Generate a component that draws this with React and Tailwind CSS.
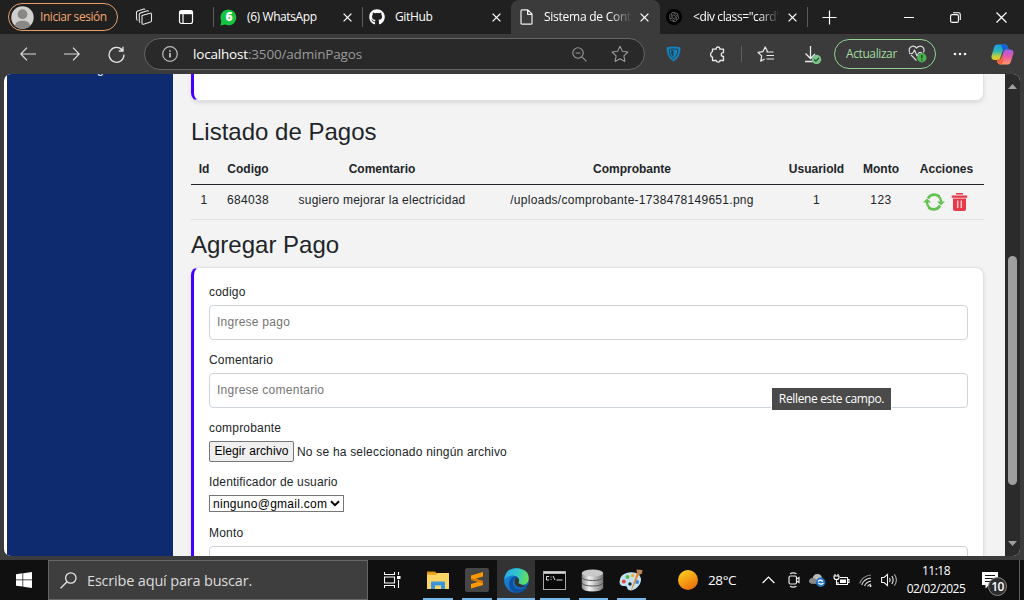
import React from 'react';
import { FaGithub } from 'react-icons/fa';
import { SiOpenai } from 'react-icons/si';

const UI = "font-['Open_Sans','Noto_Sans',sans-serif]";
const ARIAL = "font-['Liberation_Sans',Arial,sans-serif]";

function Cross({ className = '' }) {
  return (
    <svg width="9" height="9" viewBox="0 0 9 9" className={className} stroke="currentColor" strokeWidth="1.3" fill="none">
      <path d="M.6.6l7.8 7.8M8.4.6L.6 8.4" />
    </svg>
  );
}

function Avatar() {
  return (
    <svg width="23" height="23" viewBox="0 0 23 23">
      <defs>
        <clipPath id="face"><circle cx="11.5" cy="11.5" r="11.2" /></clipPath>
      </defs>
      <circle cx="11.5" cy="11.5" r="11.2" fill="#d2d0ce" />
      <g clipPath="url(#face)" fill="#8a8886">
        <circle cx="11.5" cy="8.2" r="4.9" />
        <path d="M3.5 23c0-6 2.500-8.200 8-8.200s8 2.200 8 8.200z" />
      </g>
    </svg>
  );
}

function WorkspacesIcon() {
  return (
    <svg width="18" height="18" viewBox="0 0 18 18" fill="none" stroke="#e4e4e4" strokeWidth="1.1" strokeLinejoin="round">
      <path d="M7 7.500L15.200 5.200Q16.500 5 16.500 6.300V12.500Q16.500 13.500 15.500 13.900L8.500 16.200Q7 16.500 7 15z" />
      <path d="M4.300 13.800V6.500Q4.300 5.300 5.500 4.900L12.300 2.800Q13.300 2.600 13.500 3.600" />
      <path d="M1.500 11.600V4.500Q1.500 3.300 2.700 2.900L8.800 1Q9.800.8 10 1.600" />
      <path d="M1.500 11.500l1 .7M4.300 13.800l1 .7" />
    </svg>
  );
}

function TabActionsIcon() {
  return (
    <svg width="16" height="16" viewBox="0 0 16 16" fill="none" stroke="#fff">
      <rect x="1.500" y="1.500" width="13" height="13" rx="2" strokeWidth="1.200" />
      <path d="M1.500 3.500h13" strokeWidth="3.400" />
      <path d="M5 4.500v10" strokeWidth="1.200" />
    </svg>
  );
}

function WhatsAppIcon() {
  return (
    <span className="relative flex size-[17px] items-center justify-center">
      <svg width="17" height="17" viewBox="0 0 17 17" className="absolute inset-0">
        <path d="M.5 16.500L1.300 12A7.900 7.900 0 1 1 5 15.600z" fill="#16c53f" />
      </svg>
      <span className="relative pl-px font-['Open_Sans',sans-serif] text-[12px] leading-none font-extrabold text-white">6</span>
    </span>
  );
}

function PageIcon() {
  return (
    <svg width="13" height="16" viewBox="0 0 13 16" fill="none" stroke="#f0f0f0" strokeWidth="1.200" strokeLinejoin="round">
      <path d="M2.200.8H7.800L12 5V14.200Q12 15.200 11 15.200H2Q1 15.200 1 14.200V2Q1 .8 2.200.8zM7.600.8V5.300H12" />
    </svg>
  );
}

function TabStrip() {
  return (
    <header className={`${UI} flex h-[34px] shrink-0 items-stretch bg-[#202020] text-[12px] text-white`}>
      <div className="flex w-[118px] items-center pl-2">
        <div className="flex h-7 w-[110px] items-center rounded-full border border-[#e8a06c] pl-[2px] text-[#f3a76f]">
          <Avatar />
          <span className="pl-[6px] tracking-[-0.45px] whitespace-nowrap">Iniciar sesión</span>
        </div>
      </div>
      <div className="flex w-[52px] items-center justify-center"><WorkspacesIcon /></div>
      <div className="flex w-[32px] items-center justify-center"><TabActionsIcon /></div>
      <div className="flex w-[160px] items-center pl-[11px]">
        <i className="h-5 w-px bg-[#5a5a5a]" />
        <span className="ml-[6px]"><WhatsAppIcon /></span>
        <span className="ml-[10px] w-[96px] tracking-[-0.4px] whitespace-nowrap">(6) WhatsApp</span>
        <Cross />
      </div>
      <div className="flex w-[149px] items-center">
        <i className="h-5 w-px bg-[#5a5a5a]" />
        <FaGithub size={16} className="ml-[6px]" />
        <span className="ml-[10px] w-[97px] tracking-[-0.35px]">GitHub</span>
        <Cross />
      </div>
      <div className="flex w-[149px] items-center rounded-t-lg bg-[#3b3b3b] pl-[9px]">
        <PageIcon />
        <span className="ml-[11px] w-[88px] overflow-hidden mask-r-from-75% tracking-[-0.25px] whitespace-nowrap">Sistema de Control</span>
        <Cross className="ml-[8px]" />
      </div>
      <div className="flex w-[149px] items-center pl-[6px]">
        <span className="flex size-4 items-center justify-center rounded-full bg-black text-[#777]"><SiOpenai size={10} /></span>
        <span className="ml-[11px] w-[87px] overflow-hidden mask-r-from-75% tracking-[-0.4px] whitespace-nowrap">&lt;div class="card"&gt;</span>
        <Cross className="ml-[8px]" />
        <i className="ml-[10px] h-5 w-px bg-[#5a5a5a]" />
      </div>
      <div className="flex w-[40px] items-center justify-center">
        <svg width="15" height="15" viewBox="0 0 15 15" stroke="#fff" strokeWidth="1.200"><path d="M7.500.5v14M.5 7.500h14" /></svg>
      </div>
      <div className="ml-auto flex w-[138px] items-center">
        <span className="flex w-[46px] justify-center"><i className="h-px w-[10px] bg-white" /></span>
        <span className="flex w-[46px] justify-center">
          <svg width="11" height="11" viewBox="0 0 11 11" fill="none" stroke="#fff" strokeWidth="1.100">
            <rect x=".6" y="2.600" width="7.800" height="7.800" rx="1.500" />
            <path d="M3 .7H8.500Q10.300.7 10.300 2.500V8" />
          </svg>
        </span>
        <span className="flex w-[46px] justify-center">
          <svg width="11" height="11" viewBox="0 0 11 11" stroke="#fff" strokeWidth="1.200"><path d="M.5.5l10 10M10.500.5l-10 10" /></svg>
        </span>
      </div>
    </header>
  );
}

function AddressBar() {
  return (
    <div className="flex h-8 w-[501px] items-center rounded-full border border-[#666] bg-[#292929] pl-[17px]">
      <svg width="16" height="16" viewBox="0 0 16 16" fill="none" stroke="#bdbdbd" strokeWidth="1.200">
        <circle cx="8" cy="8" r="7.300" />
        <path d="M8 7v4.500M8 4.200v1.600" strokeWidth="1.800" />
      </svg>
      <span className="ml-[15px] w-[379px] text-[13.500px] tracking-[-0.18px] text-[#9a9a9a]">
        <span className="text-white">localhost</span>:3500/adminPagos
      </span>
      <svg width="15" height="15" viewBox="0 0 15 15" fill="none" stroke="#999" strokeWidth="1.100">
        <circle cx="6" cy="6" r="5.200" /><path d="M3.500 6h5M9.800 9.800l4.700 4.500" />
      </svg>
      <svg width="18" height="18" viewBox="0 0 18 18" fill="none" stroke="#999" strokeWidth="1.100" strokeLinejoin="round" className="ml-[24px]">
        <path d="M9 1.200l2.400 5 5.500.8-4 3.900 1 5.500L9 13.800l-4.900 2.600 1-5.500-4-3.900 5.500-.8z" />
      </svg>
    </div>
  );
}

function CopilotIcon() {
  return (
    <svg width="23" height="21" viewBox="0 0 23 21">
      <defs>
        <linearGradient id="cpa" x1="0" y1="0" x2="0" y2="1">
          <stop offset="0" stopColor="#169be9" /><stop offset=".45" stopColor="#32b8b0" /><stop offset=".75" stopColor="#b9cf45" /><stop offset="1" stopColor="#f3c51c" />
        </linearGradient>
        <linearGradient id="cpb" x1="0" y1="0" x2="0" y2="1">
          <stop offset="0" stopColor="#a15ce8" /><stop offset=".5" stopColor="#e85aa4" /><stop offset="1" stopColor="#ff9a64" />
        </linearGradient>
      </defs>
      <path d="M6 .5H14.500Q16.500.5 17 3L17.600 5.500H14Q12 5.500 11.300 8L9.500 13.500Q8.800 16 6.500 16H3.500Q-.5 15.500.8 11L3 3.500Q3.800.5 6 .5z" fill="url(#cpa)" />
      <path d="M10 .5H14.500Q16.500.5 17 3L17.600 5.500H14Q12.500 5.500 11.800 6.500Z" fill="#1464d2" />
      <path d="M17 20.500H9.500Q7 20.500 6.300 18L5.700 15.700H7.500Q10 15.700 10.700 13L12.300 8Q13.200 5.400 15.500 5.400H19Q23.300 5.600 22.200 10L19.900 17.800Q19 20.500 17 20.500z" fill="url(#cpb)" />
      <path d="M5.700 15.700H7.500Q10 15.700 10.700 13l.6-2 1.200 5q-.5 4-3.500 4.500Q7 20 6.300 18z" fill="#f0643c" />
    </svg>
  );
}

function Toolbar() {
  return (
    <div className={`${UI} flex h-10 shrink-0 items-center bg-[#3b3b3b] text-[#e8e8e8]`}>
      <div className="flex w-[144px] items-center pl-5">
        <svg width="16" height="14" viewBox="0 0 16 14" fill="none" stroke="#dedede" strokeWidth="1.200"><path d="M16 7H1M7 .7L.8 7 7 13.300" /></svg>
        <svg width="16" height="14" viewBox="0 0 16 14" fill="none" stroke="#dedede" strokeWidth="1.200" className="ml-[28px]"><path d="M0 7h15M9 .7L15.200 7 9 13.300" /></svg>
        <svg width="17" height="17" viewBox="0 0 17 17" fill="none" stroke="#e8e8e8" strokeWidth="1.300" className="ml-[28px]">
          <path d="M14.500 4.500A7.400 7.400 0 1 0 15.900 8.500M15 .8V5H10.800" />
        </svg>
      </div>
      <AddressBar />
      <div className="flex w-[56px] justify-center">
        <svg width="15" height="16" viewBox="0 0 15 16">
          <path d="M.5 1.500Q4 .5 7.500.5T14.500 1.500Q14.500 11.500 7.500 15.500Q.5 11.500.5 1.500z" fill="#1683bd" />
          <path d="M3.200 3.400Q7.500 2.400 11.800 3.400Q11.800 10 7.500 12.800Q3.200 10 3.200 3.400z" fill="none" stroke="#243f4e" strokeWidth="1" />
          <path d="M5 4.500Q6.500 4.200 7.500 4.200V11Q5 9 5 4.500z" fill="#243f4e" />
        </svg>
      </div>
      <div className="flex w-[33px] justify-center">
        <svg width="16" height="17" viewBox="0 0 16 17" fill="none" stroke="#ececec" strokeWidth="1.300" strokeLinejoin="round">
          <path d="M2.500 5.500V3.200H6.200Q6 1 8 1T9.800 3.200H13.500V6.600Q11.200 6.600 11.200 8.500T13.500 10.500V14.500H10Q10 16.200 8.200 16.200T6.200 14.500H2.500V11.200Q.6 10.600.6 8.500T2.500 5.500z" />
        </svg>
      </div>
      <i className="ml-[7px] h-4 w-px bg-[#606060]" />
      <svg width="18" height="17" viewBox="0 0 18 17" fill="none" stroke="#ececec" strokeWidth="1.200" strokeLinejoin="round" className="ml-[15px]">
        <path d="M10.500 5.500L8.200 1 6 5.600 1 6.400l3.700 3.500-1 5.300L7.500 13M9.500 6h7M9.500 9.500H17M9.500 13H17" />
      </svg>
      <svg width="19" height="20" viewBox="0 0 19 20" fill="none" className="ml-[28px]">
        <path d="M7.500 2v12M2.500 9.500l5 5 4.500-4.500M2 17.500h8" stroke="#ececec" strokeWidth="1.300" />
        <circle cx="13.500" cy="15.500" r="4.700" fill="#7cc48d" />
        <path d="M11.200 15.500l1.700 1.700 3-3.200" stroke="#234d2e" strokeWidth="1.200" />
      </svg>
      <div className="ml-[12px] flex h-[30px] w-[102px] items-center rounded-full border border-[#93d394] pl-[11px] text-[12px] text-[#a2dca2]">
        <span className="w-[62px] tracking-[-0.4px]">Actualizar</span>
        <svg width="19" height="18" viewBox="0 0 19 18" fill="none" stroke="#d8d8d8" strokeWidth="1.200" strokeLinejoin="round">
          <path d="M1.800 7.500Q0 4 2.800 2Q6 0 8.500 3Q11.500 0 14.500 2Q17 4 15.500 7.500M3 10l5.500 5.500" />
          <path d="M1 8.500H4.500L6.500 5l2.500 6 2-3.500H14" />
          <circle cx="13.800" cy="12.800" r="4.700" fill="#4caf50" stroke="none" />
          <path d="M13.800 10v3.300M13.800 14.500v1.200" stroke="#163a18" strokeWidth="1.300" />
        </svg>
      </div>
      <svg width="14" height="4" viewBox="0 0 14 4" fill="#f0f0f0" className="ml-[17px]">
        <circle cx="2" cy="2" r="1.300" /><circle cx="7" cy="2" r="1.300" /><circle cx="12" cy="2" r="1.300" />
      </svg>
      <span className="ml-[24px]"><CopilotIcon /></span>
    </div>
  );
}

const COLS = 'grid grid-cols-[24px_64px_204px_296px_73px_56px_75px] pl-px text-center';

function PaymentsTable() {
  return (
    <div className="h-[72px] text-[12px]">
      <div className={`${COLS} h-[33px] border-b border-[#212529] pt-[8px] leading-[18px] font-bold`}>
        <span>Id</span><span>Codigo</span><span>Comentario</span><span>Comprobante</span>
        <span>UsuarioId</span><span>Monto</span><span>Acciones</span>
      </div>
      <div className={`${COLS} h-[35px] border-b border-[#dee2e6] pt-[6px] leading-[18px] tracking-[0.22px]`}>
        <span>1</span><span className="tracking-[0.33px]">684038</span><span>sugiero mejorar la electricidad</span>
        <span className="tracking-[0.28px]">/uploads/comprobante-1738478149651.png</span><span>1</span><span className="tracking-[0.5px]">123</span>
        <span className="flex gap-[6px] pt-px pl-[14px]">
          <svg width="22" height="20" viewBox="0 0 22 20" fill="none" stroke="#65c152" strokeWidth="2.700">
            <path d="M5 6.500Q7 2.700 11.500 2.700Q14.500 2.700 16.500 4.800M17 13.500Q15 17.300 10.500 17.300Q7.500 17.300 5.500 15.200" />
            <path d="M4 9v2q.5 3 2.500 4.800M18 11V9q-.5-3-2.500-4.800" strokeWidth="2.300" />
            <path d="M0 10.500L4 6.500 8 10.500zM14 9.500h8L18 13.500z" fill="#65c152" stroke="none" />
          </svg>
          <svg width="17" height="20" viewBox="0 0 17 20">
            <path d="M5 1h7v1.500H5zM.8 3.500h15.400V5.800H.8zM2 6.500H15V17Q15 19 13 19H4Q2 19 2 17z" fill="#e8394a" />
            <path d="M6.700 8.500v7.500M10.300 8.500v7.500" stroke="#f7c9cd" strokeWidth="1.500" />
          </svg>
        </span>
      </div>
    </div>
  );
}

function Field({ label, placeholder }) {
  return (
    <div className="h-[68px]">
      <label className="block h-[22px] leading-[18px]">{label}</label>
      <input
        placeholder={placeholder}
        className="block h-[35px] w-[759px] rounded-[4px] border border-[#ced4da] bg-white px-[7px] pb-[2px] tracking-[0.25px] placeholder:text-[#757575]"
      />
    </div>
  );
}

function PaymentForm() {
  return (
    <div className="h-[400px] w-[793px] rounded-lg border border-l-[3px] border-[#dee2e6] border-l-[#4400ff] bg-white pt-[15px] pl-[15px] text-[12px] tracking-[0.2px] shadow-[0_2px_4px_rgba(0,0,0,0.1)]">
      <Field label="codigo" placeholder="Ingrese pago" />
      <Field label="Comentario" placeholder="Ingrese comentario" />
      <div className="h-[54px]">
        <span className="block h-[22px] leading-[18px]">comprobante</span>
        <div className="flex items-center">
          <button className="h-[21px] w-[85px] rounded-[2px] border border-[#767676] bg-[#efefef] pb-px leading-[17px] tracking-[0.1px] whitespace-nowrap text-black">Elegir archivo</button>
          <span className="ml-[3px]">No se ha seleccionado ningún archivo</span>
        </div>
      </div>
      <div className="h-[51px]">
        <span className="block h-[22px] leading-[18px] tracking-[0.16px]">Identificador de usuario</span>
        <div className="flex h-[17px] w-[135px] items-center border border-[#767676] pl-[3px] text-black">
          <span className="w-[117px] pt-px leading-[15px] tracking-[0.28px]">ninguno@gmail.com</span>
          <svg width="10" height="7" viewBox="0 0 10 7" fill="none" stroke="#000" strokeWidth="2"><path d="M1 1.200l4 4 4-4" /></svg>
        </div>
      </div>
      <Field label="Monto" placeholder="" />
    </div>
  );
}

function Viewport() {
  return (
    <div className={`${ARIAL} relative flex h-[486px] shrink-0 bg-[#3b3b3b] px-1 pb-1 text-[#212529]`}>
      <div className="flex h-[482px] w-full overflow-hidden rounded-[7px] bg-white pl-[3px]">
        <aside className="w-[166px] shrink-0 overflow-hidden bg-[#0f2b70] pl-[90px] text-[12px] text-white">
          <p className="-mt-[13px] leading-[16px]">g</p>
        </aside>
        <main className="h-[482px] w-[832px] shrink-0 overflow-hidden bg-[#f3f3f3] pl-[18px]">
          <div className="h-[27px] w-[793px] rounded-b-lg border border-t-0 border-l-[3px] border-[#dee2e6] border-l-[#4400ff] bg-white shadow-[0_2px_4px_rgba(0,0,0,0.1)]" />
          <h2 className="mt-[16px] h-[35px] text-[24px] leading-[29px]">Listado de Pagos</h2>
          <div className="w-[793px]"><PaymentsTable /></div>
          <h2 className="mt-[6px] h-[37px] text-[24px] leading-[29px]">Agregar Pago</h2>
          <PaymentForm />
        </main>
        <div className="flex w-[15px] shrink-0 flex-col items-center bg-[#2b2b2b] pt-[10px] pb-[10px]">
          <svg width="9" height="5" viewBox="0 0 9 5" fill="#a0a0a0"><path d="M4.500 0L9 5H0z" /></svg>
          <i className="mt-[167px] h-[229px] w-[9px] rounded-full bg-[#9f9f9f]" />
          <svg width="9" height="5" viewBox="0 0 9 5" fill="#a0a0a0" className="mt-auto"><path d="M0 0h9L4.500 5z" /></svg>
        </div>
      </div>
      <div className={`${UI} absolute top-[314px] left-[772px] flex h-[22px] w-[119px] items-center justify-center bg-[#4a4a4a] text-[12px] tracking-[-0.35px] whitespace-nowrap text-white outline outline-white`}>
        Rellene este campo.
      </div>
    </div>
  );
}

function EdgeLogo() {
  return (
    <svg width="25" height="25" viewBox="0 0 24 24">
      <defs>
        <linearGradient id="eg1" x1="0" y1=".3" x2="1" y2=".5"><stop offset="0" stopColor="#2aa9e8" /><stop offset=".5" stopColor="#2fc5c9" /><stop offset="1" stopColor="#67df55" /></linearGradient>
        <linearGradient id="eg2" x1="0" y1="0" x2="1" y2="1"><stop offset="0" stopColor="#1b8fe0" /><stop offset="1" stopColor="#0d58ac" /></linearGradient>
      </defs>
      <circle cx="12" cy="12" r="11.800" fill="url(#eg2)" />
      <path d="M.3 11Q1.500.2 12 .2Q23.800.8 23.800 10.200Q23.500 16 17.500 16Q13.500 16 13.700 14.300Q15.300 12.500 14 10Q12 7 8 7.300Q3 7.500.3 11z" fill="url(#eg1)" />
      <path d="M13.900 10Q11.500 8.800 9.500 11Q7.500 14 9.500 17.500Q12 21 17 20.600Q20 20.200 22 18Q18 25 11 23.600Q4.500 21.500 5 15Q5.700 9 11 8Q13 8.500 13.900 10z" fill="#0c4f9e" />
      <path d="M13.900 10Q11.500 8.800 10.200 11.500Q9.300 15 12.500 17.500Q17 20 22.500 16.600Q23 17 22 18.200Q24 15 24 20L22 18Q18 17 13.700 14.300Q15.300 12.500 13.900 10z" fill="#333" />
    </svg>
  );
}

function TaskIcon({ children, bar, active }) {
  return (
    <span className={`flex h-10 flex-col items-center ${active ? 'w-[38px] bg-[#333]' : ''} ${bar}`}>
      <span className="flex h-[38px] items-center pt-[2px]">{children}</span>
      <i className="h-[2px] w-full bg-[#76b9ed]" />
    </span>
  );
}

function Taskbar() {
  return (
    <footer className={`${UI} flex h-10 shrink-0 items-center bg-[#101010] text-white`}>
      <div className="flex w-12 justify-center">
        <svg width="16" height="16" viewBox="0 0 16 16" fill="#fff"><path d="M0 2.200L6.500 1.300V7.500H0zM7.200 1.200L16 0V7.500H7.200zM0 8.300H6.500V14.600L0 13.700zM7.200 8.300H16V16L7.200 14.700z" /></svg>
      </div>
      <div className="flex h-10 w-[320px] items-center border border-[#666] bg-[#3e3e3e] pl-[11px]">
        <svg width="17" height="17" viewBox="0 0 17 17" fill="none" stroke="#e6e6e6" strokeWidth="1.300"><circle cx="10.800" cy="6" r="5.200" /><path d="M7 9.800L.6 16.300" /></svg>
        <span className="ml-[10px] pt-px text-[14.500px] tracking-[-0.18px] text-[#dcdcdc]">Escribe aquí para buscar.</span>
      </div>
      <svg width="17" height="16" viewBox="0 0 17 16" fill="none" stroke="#fff" strokeWidth="1.100" className="ml-[16px]">
        <path d="M.5 0v2.500h10V0M.5 5h10v6H.5zM.5 16v-2.500h10V16M14.500 0v3M14.500 8v8" /><path d="M13 4h3.500v3H13z" fill="#fff" stroke="none" />
      </svg>
      <TaskIcon bar="ml-[22px] w-[30px]">
        <svg width="22" height="19" viewBox="0 0 22 19">
          <path d="M0 .5H8l2 2H0z" fill="#d99213" /><path d="M0 2H22V18H0z" fill="#fbd466" /><path d="M0 4H9l2-2H0z" fill="#eba91d" />
          <path d="M4 18V11.500Q4 10.500 5 10.500H17Q18 10.500 18 11.500V18H14V14.500H8V18z" fill="#3b95dc" />
        </svg>
      </TaskIcon>
      <TaskIcon bar="ml-[9px] w-[30px]">
        <svg width="24" height="24" viewBox="0 0 24 24"><rect width="24" height="24" rx="2" fill="#464646" /><path d="M6 7.500L18 4V8.500L10.500 10.800 18 13V17L6 20.500V16L13.500 13.800 6 11.800z" fill="#ff9800" /><path d="M6 11.800V10L18 13v2.500z" fill="#d97a00" /></svg>
      </TaskIcon>
      <TaskIcon bar="ml-[5px]" active><EdgeLogo /></TaskIcon>
      <TaskIcon bar="ml-[5px] w-[30px]">
        <svg width="23" height="19" viewBox="0 0 23 19" className="-ml-[2px]"><rect x=".5" y=".5" width="22" height="18" fill="#080808" stroke="#a9a9a9" /><path d="M1 1.800h21" stroke="#d8d8d8" strokeWidth="2" /><path d="M6 5.500H3.500V9H6M8 5.500v1M8 8v1M10 5l2 4M13.500 9h6" stroke="#e0e0e0" fill="none" /></svg>
      </TaskIcon>
      <TaskIcon bar="ml-[9px] w-[29px]">
        <svg width="23" height="23" viewBox="0 0 23 23" className="-ml-[2px]">
          <defs><linearGradient id="db"><stop offset="0" stopColor="#8d8d8d" /><stop offset=".35" stopColor="#f2f2f2" /><stop offset="1" stopColor="#777" /></linearGradient></defs>
          <path d="M.8 4V19Q3 22.500 11.500 22.500T22.200 19V4z" fill="url(#db)" />
          <ellipse cx="11.500" cy="4" rx="10.700" ry="3.500" fill="#c9c9c9" />
          <path d="M.8 8.500Q3 11.500 11.500 11.500T22.200 8.500M.8 14Q3 17 11.500 17T22.200 14" fill="none" stroke="#555" strokeWidth="1" />
        </svg>
      </TaskIcon>
      <TaskIcon bar="ml-[9px] w-[29px]">
        <svg width="24" height="23" viewBox="0 0 24 23" className="-ml-[2px]">
          <path d="M.5 13Q.5 5 9.500 3.500Q20 2 22 9.500Q22.500 15 17 19.500Q11 23 8.500 20Q8.500 16.500 5 17Q1 17.500.5 13z" fill="#c3e3f5" />
          <circle cx="4.800" cy="12.500" r="2" fill="#e2483d" /><circle cx="8.500" cy="8" r="2" fill="#58b947" /><circle cx="13.700" cy="6.500" r="1.800" fill="#f1b52b" /><circle cx="18" cy="13" r="2" fill="#3d83dc" /><circle cx="11" cy="15" r="1.700" fill="#182a38" />
          <path d="M20.500 4.500L13 20.500l-1 1.500.3-2L18 3.800z" fill="#e7892b" /><path d="M17.500.5L23.500 1l-.5 3.500-2.500 1.200-2.500-1z" fill="#b98758" />
        </svg>
      </TaskIcon>
      <svg width="20" height="20" viewBox="0 0 20 20" className="ml-[32px]">
        <defs><linearGradient id="sun" x1=".2" y1="0" x2=".8" y2="1"><stop offset="0" stopColor="#ffce1f" /><stop offset="1" stopColor="#ea6a08" /></linearGradient></defs>
        <circle cx="10" cy="10" r="10" fill="url(#sun)" />
      </svg>
      <span className="ml-[10px] w-[54px] text-[13.500px] tracking-[-0.4px]">28°C</span>
      <svg width="13" height="8" viewBox="0 0 13 8" fill="none" stroke="#fff" strokeWidth="1.200"><path d="M.6 7l5.900-6 5.900 6" /></svg>
      <svg width="12" height="16" viewBox="0 0 12 16" fill="none" stroke="#e8e8e8" strokeWidth="1.200" className="ml-[13px]">
        <rect x="1" y="4" width="7.500" height="8" rx="1.500" /><path d="M8.500 7L11 5.500v5L8.500 9M2 1.800Q5 0 8.500 1.800M2 14.200Q5 16 8.500 14.200" />
      </svg>
      <svg width="17" height="14" viewBox="0 0 17 14" className="ml-[9px]">
        <path d="M3 10.500Q0 10 .3 7.500Q1 5 3.500 5.200Q5 .5 9 1Q12.500 1.500 13 5Q15.500 6 14.500 10.500z" fill="#bdbdbd" />
        <path d="M3.500 5.200Q6 4.500 8 7l4 3.500H3Q0 10 .3 7.500Q1 5 3.500 5.200" fill="#898989" />
        <circle cx="11.700" cy="9.200" r="4.700" fill="#1d74c4" /><path d="M9 8.500q2-2.500 5 0M14.400 10q-2 2.500-5 0" fill="none" stroke="#fff" strokeWidth="1.300" />
      </svg>
      <svg width="17" height="13" viewBox="0 0 17 13" fill="none" stroke="#fff" strokeWidth="1.100" className="ml-[7px]">
        <path d="M7 3.500H14.500V10.500H5V8M14.500 5.500H16v3h-1.500M2 0v2M5 0v2M1 2H6V3.500Q6 5.500 3.500 5.500T1 3.500zM3.500 5.500v5H5" /><path d="M7 5.500h6v3.500H7z" fill="#fff" stroke="none" />
      </svg>
      <svg width="13" height="13" viewBox="0 0 13 13" fill="none" strokeWidth="1.100" className="ml-[9px]">
        <path d="M.7 9.500Q3 2 12 1" stroke="#8c8c8c" /><path d="M2.800 11Q4.500 5 12 4M5.500 12Q7 8 12 7M8.500 12.500Q9.500 10.500 12 10" stroke="#dcdcdc" /><circle cx="11.500" cy="12" r="1" fill="#fff" />
      </svg>
      <svg width="17" height="14" viewBox="0 0 17 14" fill="none" stroke="#f0f0f0" strokeWidth="1.100" className="ml-[9px]">
        <path d="M.6 4.500H3L6.500 1.500v11L3 9.500H.6zM8.500 5Q10 7 8.500 9M10.800 3Q13.500 7 10.800 11" /><path d="M13.300 1.200Q17.500 7 13.300 12.800" stroke="#aaa" />
      </svg>
      <div className="ml-[3px] w-[70px] text-center text-[12px] leading-[18px] tracking-[-0.5px]">
        <p>11:18</p><p>02/02/2025</p>
      </div>
      <div className="relative ml-[11px] h-[26px] w-[26px]">
        <svg width="16" height="17" viewBox="0 0 16 17" className="absolute top-[5px] left-0"><path d="M0 0H16V13H7L3.500 16.500V13H0z" fill="#fff" /><path d="M3 3.500h10M3 6.500h10M3 9.500h6" stroke="#111" strokeWidth="1.100" /></svg>
        <span className="absolute top-[10px] left-[6px] flex size-[19px] items-center justify-center rounded-full border border-[#858585] bg-[#2d2d2d] text-[12px] font-semibold tracking-[-0.5px]">10</span>
      </div>
      <i className="ml-auto mr-[4px] h-10 w-px bg-[#5e5e5e]" />
    </footer>
  );
}

export default function App() {
  return (
    <div className="flex h-[600px] w-[1024px] flex-col overflow-hidden bg-[#101010]">
      <TabStrip />
      <Toolbar />
      <Viewport />
      <Taskbar />
    </div>
  );
}
